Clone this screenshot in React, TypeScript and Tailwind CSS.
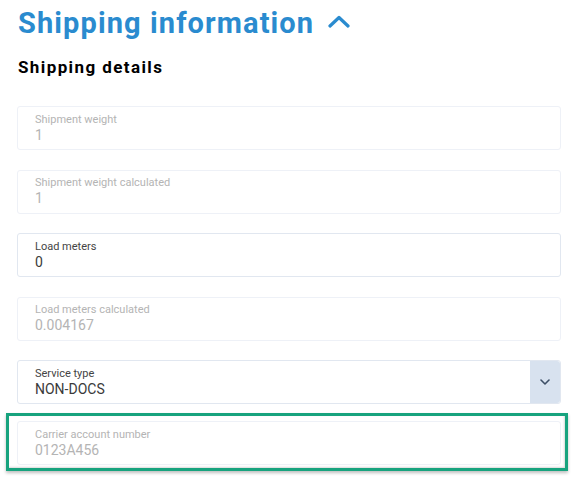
import React from "react";

type FieldProps = {
  label: string;
  value: string;
  disabled?: boolean;
  select?: boolean;
};

function Field({ label, value, disabled, select }: FieldProps) {
  return (
    <div
      className={`flex h-[44px] w-[544px] rounded-[3px] border bg-white ${
        disabled ? "border-[#eef1f7]" : "border-[#e1e7f0]"
      }`}
    >
      <div className="flex flex-1 flex-col justify-center pl-[17px]">
        <span
          className={`text-[11px] leading-[14px] ${
            disabled ? "text-[#b4b4b4]" : "text-[#444444]"
          }`}
        >
          {label}
        </span>
        <span
          className={`text-[14px] leading-[17px] ${
            disabled ? "text-[#b4b4b4]" : "text-[#3a3a3a]"
          }`}
        >
          {value}
        </span>
      </div>
      {select && (
        <div className="flex w-[30px] items-center justify-center rounded-r-[3px] bg-[#d8e2ef]">
          <svg width="10" height="6" viewBox="0 0 10 6" fill="none">
            <path
              d="M1 1l4 4 4-4"
              stroke="#3d4f66"
              strokeWidth="1.6"
              strokeLinecap="round"
              strokeLinejoin="round"
            />
          </svg>
        </div>
      )}
    </div>
  );
}

export default function App() {
  return (
    <div
      className="h-[477px] w-[574px] overflow-hidden bg-white"
      style={{ fontFamily: "Roboto, 'Noto Sans', sans-serif" }}
    >
      <div className="flex items-center gap-[14px] pl-[18px] pt-[4px]">
        <h1 className="text-[29px] font-bold leading-[38px] tracking-[1.1px] text-[#2a8bcf]">
          Shipping information
        </h1>
        <svg width="22" height="13" viewBox="0 0 22 13" fill="none" className="mt-[-3px]">
          <path
            d="M2 11L11 2.5l9 8.5"
            stroke="#2a8bcf"
            strokeWidth="3.2"
            strokeLinecap="round"
            strokeLinejoin="round"
          />
        </svg>
      </div>
      <h2 className="mt-[14px] pl-[18px] text-[17px] font-bold leading-[22px] tracking-[1.4px] text-black">
        Shipping details
      </h2>
      <div className="mt-[28px] flex flex-col gap-[19.5px] pl-[17px]">
        <Field label="Shipment weight" value="1" disabled />
        <Field label="Shipment weight calculated" value="1" disabled />
        <Field label="Load meters" value="0" />
        <Field label="Load meters calculated" value="0.004167" disabled />
        <Field label="Service type" value="NON-DOCS" select />
      </div>
      <div className="ml-[6px] mt-[9px] w-[562px] border-[3px] border-[#17a37e] px-[8px] pb-[3px] pt-[5px] shadow-[0_2px_3px_rgba(0,0,0,0.25),inset_-1px_-1px_2px_rgba(0,0,0,0.15)]">
        <Field label="Carrier account number" value="0123A456" disabled />
      </div>
    </div>
  );
}
